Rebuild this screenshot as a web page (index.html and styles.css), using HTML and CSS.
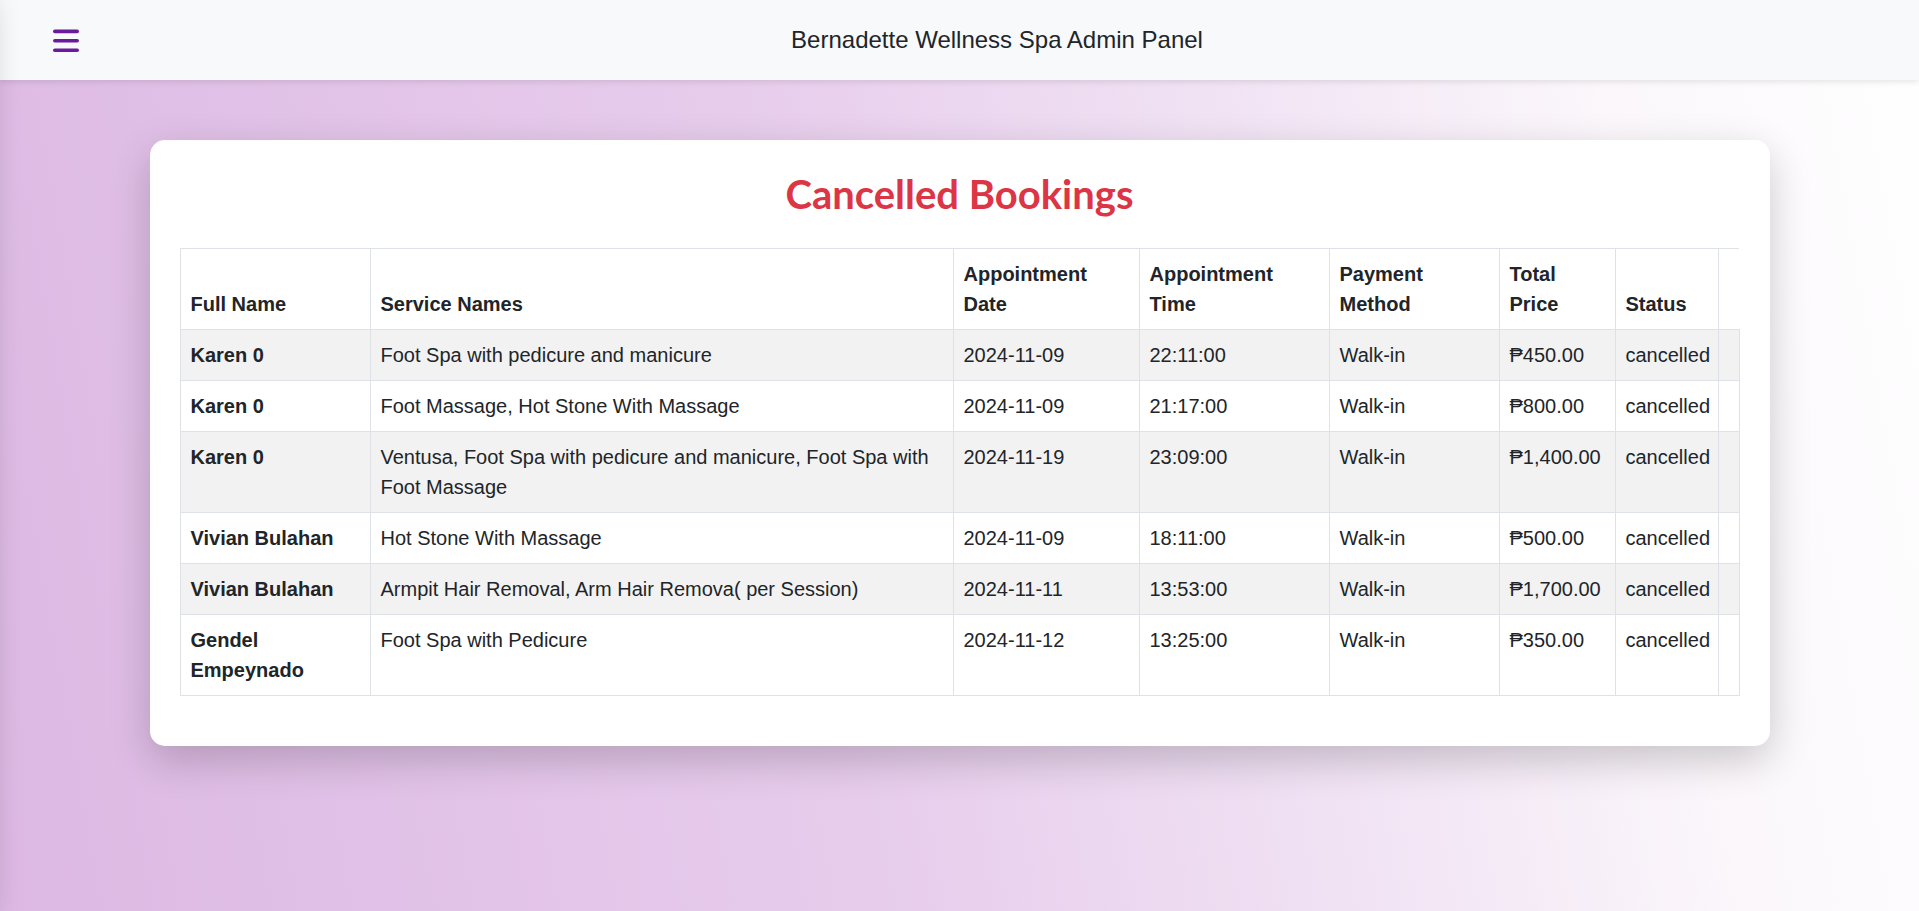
FILE: index.html
```html
<!DOCTYPE html>
<html lang="en">
<head>
<meta charset="utf-8">
<title>Cancelled Bookings - Bernadette Wellness Spa</title>
<link rel="stylesheet" href="styles.css">
</head>
<body>
<aside class="sidebar" aria-hidden="true"></aside>
<header class="topbar">
  <button class="menu-btn" type="button" aria-label="Open menu">
    <svg width="26" height="24" viewBox="0 0 26 24" aria-hidden="true">
      <g stroke="#6a1b9a" stroke-width="3.6" stroke-linecap="round">
        <line x1="1.8" y1="2.4" x2="24.2" y2="2.4"/>
        <line x1="1.8" y1="11.8" x2="24.2" y2="11.8"/>
        <line x1="1.8" y1="21.3" x2="24.2" y2="21.3"/>
      </g>
    </svg>
  </button>
  <div class="brand">Bernadette Wellness Spa Admin Panel</div>
</header>
<main class="container">
  <section class="card">
    <h2 class="card-title">Cancelled Bookings</h2>
    <table class="bookings">
      <colgroup>
        <col class="c-name"><col class="c-service"><col class="c-date"><col class="c-time"><col class="c-pay"><col class="c-price"><col class="c-status"><col class="c-extra">
      </colgroup>
      <thead>
        <tr>
          <th>Full Name</th>
          <th>Service Names</th>
          <th>Appointment Date</th>
          <th>Appointment Time</th>
          <th>Payment Method</th>
          <th>Total Price</th>
          <th>Status</th>
          <th class="empty"></th>
        </tr>
      </thead>
      <tbody>
        <tr>
          <td class="name">Karen 0</td>
          <td>Foot Spa with pedicure and manicure</td>
          <td>2024-11-09</td>
          <td>22:11:00</td>
          <td>Walk-in</td>
          <td>₱450.00</td>
          <td>cancelled</td>
          <td></td>
        </tr>
        <tr>
          <td class="name">Karen 0</td>
          <td>Foot Massage, Hot Stone With Massage</td>
          <td>2024-11-09</td>
          <td>21:17:00</td>
          <td>Walk-in</td>
          <td>₱800.00</td>
          <td>cancelled</td>
          <td></td>
        </tr>
        <tr>
          <td class="name">Karen 0</td>
          <td>Ventusa, Foot Spa with pedicure and manicure, Foot Spa with Foot Massage</td>
          <td>2024-11-19</td>
          <td>23:09:00</td>
          <td>Walk-in</td>
          <td>₱1,400.00</td>
          <td>cancelled</td>
          <td></td>
        </tr>
        <tr>
          <td class="name">Vivian Bulahan</td>
          <td>Hot Stone With Massage</td>
          <td>2024-11-09</td>
          <td>18:11:00</td>
          <td>Walk-in</td>
          <td>₱500.00</td>
          <td>cancelled</td>
          <td></td>
        </tr>
        <tr>
          <td class="name">Vivian Bulahan</td>
          <td>Armpit Hair Removal, Arm Hair Remova( per Session)</td>
          <td>2024-11-11</td>
          <td>13:53:00</td>
          <td>Walk-in</td>
          <td>₱1,700.00</td>
          <td>cancelled</td>
          <td></td>
        </tr>
        <tr>
          <td class="name">Gendel Empeynado</td>
          <td>Foot Spa with Pedicure</td>
          <td>2024-11-12</td>
          <td>13:25:00</td>
          <td>Walk-in</td>
          <td>₱350.00</td>
          <td>cancelled</td>
          <td></td>
        </tr>
      </tbody>
    </table>
  </section>
</main>
</body>
</html>
```
FILE: styles.css
```css
html, body {
  margin: 0;
  padding: 0;
}

body {
  min-height: 100vh;
  font-family: "Liberation Sans", Arial, sans-serif;
  font-size: 20px;
  line-height: 30px;
  color: #212529;
  background: linear-gradient(80deg, #dcb8e2 0%, #e2c3e8 22%, #e7ccec 42%, #f1e3f4 66%, #fbf7fb 84%, #ffffff 100%);
  overflow: hidden;
}

.sidebar {
  position: fixed;
  top: 0;
  left: -260px;
  width: 250px;
  height: 100vh;
  background: #ffffff;
  box-shadow: 0 0 28px rgba(0, 0, 0, 0.22);
  z-index: 20;
}

.topbar {
  height: 80px;
  display: flex;
  align-items: center;
  padding: 0 11px 0 46px;
  background: #f8f9fa;
  box-shadow: 0 2px 6px rgba(0, 0, 0, 0.1);
  position: relative;
  z-index: 10;
}

.menu-btn {
  width: 40px;
  height: 40px;
  padding: 0;
  margin: 0;
  border: 0;
  background: transparent;
  display: flex;
  align-items: center;
  justify-content: center;
  cursor: pointer;
}

.menu-btn svg {
  display: block;
  margin-top: 2px;
}

.brand {
  flex: 1;
  text-align: center;
  font-size: 24px;
  line-height: 30px;
  color: #212529;
}

.container {
  max-width: 1620px;
  margin: 60px auto 0;
}

.card {
  background: #ffffff;
  border-radius: 15px;
  padding: 30px 30px 30px;
  box-shadow: 0 14px 42px rgba(0, 0, 0, 0.2);
}

.card-title {
  margin: 0 0 30px;
  text-align: center;
  font-family: Lato, "Liberation Sans", sans-serif;
  font-weight: 700;
  font-size: 40px;
  line-height: 48px;
  color: #dc3545;
}

.bookings {
  width: 100%;
  table-layout: fixed;
  border-collapse: collapse;
  margin-bottom: 20px;
}

.c-name { width: 190px; }
.c-service { width: 583px; }
.c-date { width: 186px; }
.c-time { width: 190px; }
.c-pay { width: 170px; }
.c-price { width: 116px; }
.c-status { width: 103px; }
.c-extra { width: 21px; }

.bookings tr {
  border-top: 1px solid #dee2e6;
  border-bottom: 1px solid #dee2e6;
}

.bookings th,
.bookings td {
  padding: 10px;
  border-left: 1px solid #dee2e6;
  border-right: 1px solid #dee2e6;
  text-align: left;
  overflow-wrap: normal;
}

.bookings th {
  font-weight: 700;
  vertical-align: bottom;
  background: #ffffff;
}

.bookings th.empty {
  border-right: 0;
}

.bookings td {
  vertical-align: top;
  font-weight: 400;
}

.bookings td.name {
  font-weight: 700;
}

.bookings tbody tr:nth-child(odd) td {
  background: #f2f2f2;
}
```
